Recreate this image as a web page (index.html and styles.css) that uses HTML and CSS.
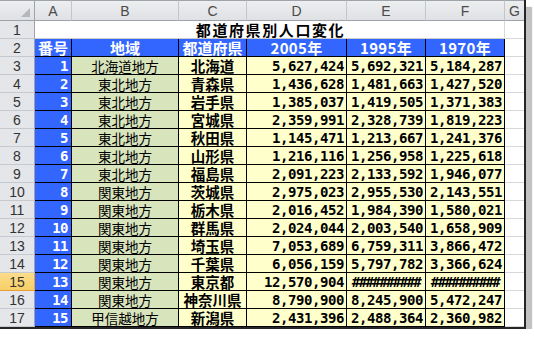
FILE: index.html
```html
<!DOCTYPE html>
<html lang="ja">
<head>
<meta charset="utf-8">
<title>都道府県別人口変化</title>
<link rel="stylesheet" href="styles.css">
</head>
<body>
<div class="window">
  <div class="sheet">
    <div class="ch corner"><span class="tri"></span></div>
    <div class="ch">A</div><div class="ch">B</div><div class="ch">C</div><div class="ch">D</div><div class="ch">E</div><div class="ch">F</div><div class="ch last">G</div>

    <div class="rh">1</div><div class="title">都道府県別人口変化</div><div class="g"></div>

    <div class="rh">2</div><div class="hd">番号</div><div class="hd">地域</div><div class="hd">都道府県</div><div class="hd num-h">2005年</div><div class="hd num-h">1995年</div><div class="hd num-h">1970年</div><div class="g"></div>

    <div class="rh">3</div><div class="no">1</div><div class="reg">北海道地方</div><div class="pref">北海道</div><div class="n">5,627,424</div><div class="n">5,692,321</div><div class="n">5,184,287</div><div class="g"></div>
    <div class="rh">4</div><div class="no">2</div><div class="reg">東北地方</div><div class="pref">青森県</div><div class="n">1,436,628</div><div class="n">1,481,663</div><div class="n">1,427,520</div><div class="g"></div>
    <div class="rh">5</div><div class="no">3</div><div class="reg">東北地方</div><div class="pref">岩手県</div><div class="n">1,385,037</div><div class="n">1,419,505</div><div class="n">1,371,383</div><div class="g"></div>
    <div class="rh">6</div><div class="no">4</div><div class="reg">東北地方</div><div class="pref">宮城県</div><div class="n">2,359,991</div><div class="n">2,328,739</div><div class="n">1,819,223</div><div class="g"></div>
    <div class="rh">7</div><div class="no">5</div><div class="reg">東北地方</div><div class="pref">秋田県</div><div class="n">1,145,471</div><div class="n">1,213,667</div><div class="n">1,241,376</div><div class="g"></div>
    <div class="rh">8</div><div class="no">6</div><div class="reg">東北地方</div><div class="pref">山形県</div><div class="n">1,216,116</div><div class="n">1,256,958</div><div class="n">1,225,618</div><div class="g"></div>
    <div class="rh">9</div><div class="no">7</div><div class="reg">東北地方</div><div class="pref">福島県</div><div class="n">2,091,223</div><div class="n">2,133,592</div><div class="n">1,946,077</div><div class="g"></div>
    <div class="rh">10</div><div class="no">8</div><div class="reg">関東地方</div><div class="pref">茨城県</div><div class="n">2,975,023</div><div class="n">2,955,530</div><div class="n">2,143,551</div><div class="g"></div>
    <div class="rh">11</div><div class="no">9</div><div class="reg">関東地方</div><div class="pref">栃木県</div><div class="n">2,016,452</div><div class="n">1,984,390</div><div class="n">1,580,021</div><div class="g"></div>
    <div class="rh">12</div><div class="no">10</div><div class="reg">関東地方</div><div class="pref">群馬県</div><div class="n">2,024,044</div><div class="n">2,003,540</div><div class="n">1,658,909</div><div class="g"></div>
    <div class="rh">13</div><div class="no">11</div><div class="reg">関東地方</div><div class="pref">埼玉県</div><div class="n">7,053,689</div><div class="n">6,759,311</div><div class="n">3,866,472</div><div class="g"></div>
    <div class="rh">14</div><div class="no">12</div><div class="reg">関東地方</div><div class="pref">千葉県</div><div class="n">6,056,159</div><div class="n">5,797,782</div><div class="n">3,366,624</div><div class="g"></div>
    <div class="rh sel">15</div><div class="no">13</div><div class="reg">関東地方</div><div class="pref">東京都</div><div class="n">12,570,904</div><div class="n hash">##########</div><div class="n hash">##########</div><div class="g"></div>
    <div class="rh">16</div><div class="no">14</div><div class="reg">関東地方</div><div class="pref">神奈川県</div><div class="n">8,790,900</div><div class="n">8,245,900</div><div class="n">5,472,247</div><div class="g"></div>
    <div class="rh">17</div><div class="no">15</div><div class="reg">甲信越地方</div><div class="pref">新潟県</div><div class="n">2,431,396</div><div class="n">2,488,364</div><div class="n">2,360,982</div><div class="g"></div>
  </div>
</div>
</body>
</html>
```
FILE: styles.css
```css
html, body {
  margin: 0;
  padding: 0;
  background: #ffffff;
}

.window {
  width: 524px;
  height: 327px;
  border-right: 2px solid #262626;
  border-bottom: 2px solid #262626;
  box-shadow: 6px 7px 1px #c2c2c2;
  background: #ffffff;
  overflow: hidden;
}

.sheet {
  display: grid;
  grid-template-columns: 35px 37px 107px 68px 100px 79px 79px 19px;
  grid-template-rows: 21px repeat(17, 18px);
  font-family: "Noto Sans CJK JP", "Noto Sans", sans-serif;
}

.sheet > div {
  box-sizing: border-box;
  display: flex;
  align-items: center;
  justify-content: center;
  overflow: hidden;
  white-space: nowrap;
  line-height: 16px;
}

/* column headers */
.ch {
  background: linear-gradient(#eceef0, #dfe1e4);
  border-top: 1px solid #9fa4aa;
  border-bottom: 1px solid #9ea3a9;
  border-right: 1px solid #c2c6cb;
  font-family: "Liberation Sans", "DejaVu Sans", sans-serif;
  font-size: 14px;
  color: #4b4b4b;
  padding-top: 1px;
}
.ch.last {
  border-right: none;
}
.corner {
  position: relative;
  border-right: 1px solid #9ea3a9;
}
.tri {
  position: absolute;
  right: 4px;
  bottom: 3px;
  width: 0;
  height: 0;
  border-left: 9px solid transparent;
  border-bottom: 9px solid #b4b8bd;
}

/* row headers */
.rh {
  background: #e4e6e9;
  border-right: 1px solid #9ea3a9;
  border-bottom: 1px solid #c6cacf;
  font-family: "Liberation Sans", "DejaVu Sans", sans-serif;
  font-size: 14px;
  color: #333333;
}
.rh.sel {
  background: linear-gradient(#fbdc8a, #f8cf66);
  border-right: 1px solid #e99e3a;
  border-bottom: 1px solid #e99e3a;
}

/* empty grid cells */
.g {
  border-bottom: 1px solid #d6d8dc;
}

/* title */
.title {
  grid-column: 2 / span 6;
  border-right: 1px solid #d6d8dc;
  border-bottom: 1px solid #c8cacc;
  font-weight: 700;
  font-size: 15px;
  letter-spacing: 1.6px;
  color: #000000;
  padding-left: 2px;
}

/* header row */
.hd {
  background: #3366ff;
  color: #ffffff;
  font-weight: 700;
  font-size: 15px;
  border-right: 1px solid #000000;
  border-bottom: 1px solid #000000;
}
.num-h {
  letter-spacing: 0.3px;
}

/* number column */
.sheet > .no {
  background: #3366ff;
  color: #ffffff;
  justify-content: flex-end;
  padding-right: 3px;
  font-family: "DejaVu Sans Mono", monospace;
  font-weight: 700;
  font-size: 14px;
  letter-spacing: -0.5px;
  border-right: 1px solid #000000;
  border-bottom: 1px solid #000000;
}

/* region */
.reg {
  background: #d8e4bc;
  font-size: 13.5px;
  color: #000000;
  border-right: 1px solid #000000;
  border-bottom: 1px solid #000000;
}

/* prefecture */
.pref {
  background: #ffffcc;
  font-weight: 700;
  font-size: 14.5px;
  color: #000000;
  border-right: 1px solid #000000;
  border-bottom: 1px solid #000000;
}

/* numbers */
.sheet > .n {
  background: #ffffcc;
  justify-content: flex-end;
  padding-right: 2px;
  font-family: "DejaVu Sans Mono", monospace;
  font-weight: 700;
  font-size: 14px;
  letter-spacing: -0.43px;
  color: #000000;
  border-right: 1px solid #000000;
  border-bottom: 1px solid #000000;
}
.sheet > .n.hash {
  justify-content: center;
  padding-right: 0;
  letter-spacing: -1.6px;
  font-size: 14px;
}
```
